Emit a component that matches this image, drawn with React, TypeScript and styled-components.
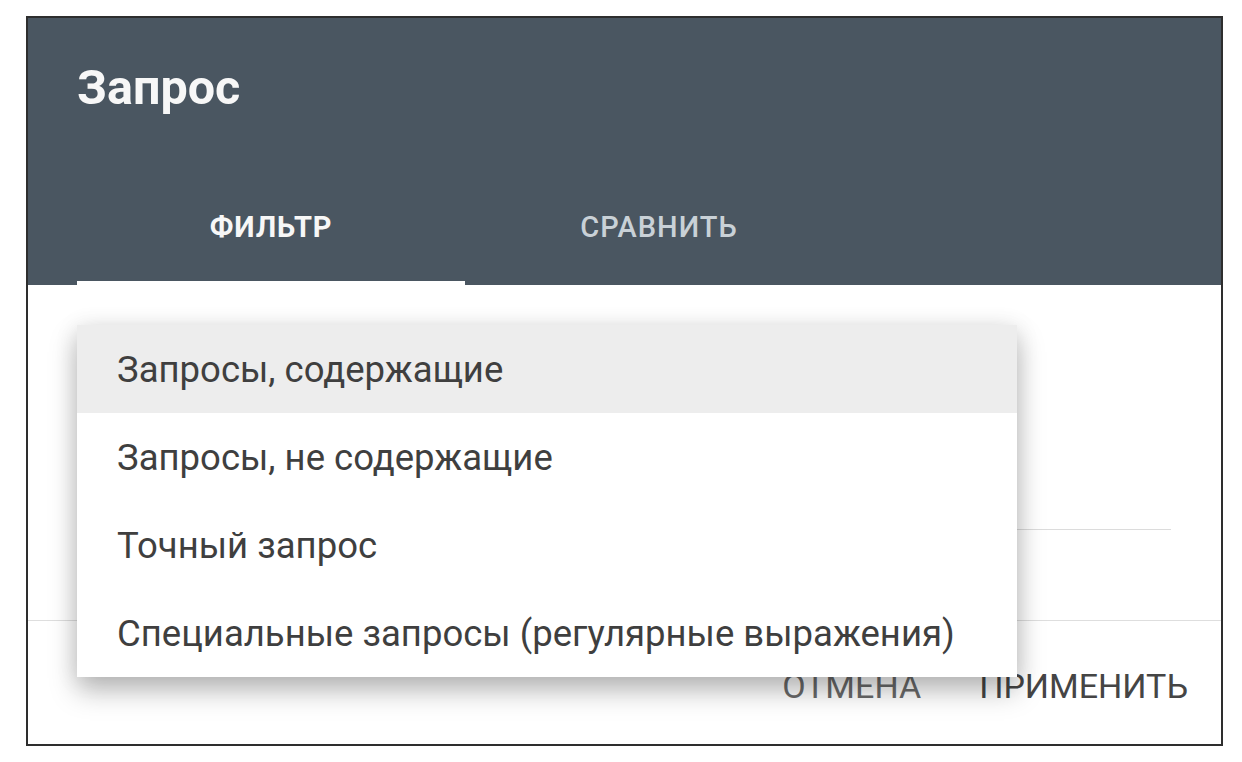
import React from 'react'
import styled, { createGlobalStyle } from 'styled-components'

const GlobalStyle = createGlobalStyle`
  html, body {
    margin: 0;
    padding: 0;
    background: #ffffff;
    font-family: Roboto, "Liberation Sans", Arial, sans-serif;
  }
`

const Page = styled.div`
  padding: 16px 0 0 26px;
`

const Dialog = styled.div`
  position: relative;
  box-sizing: border-box;
  width: 1197px;
  height: 730px;
  border: 2px solid #2e2e2e;
  background: #fff;
  display: flex;
  flex-direction: column;
`

const Header = styled.div`
  height: 267px;
  background: #4a5661;
  display: flex;
  flex-direction: column;
  justify-content: space-between;
`

const Title = styled.h1`
  margin: 0;
  padding: 44px 0 0 49px;
  font-size: 48.5px;
  font-weight: 700;
  line-height: 52px;
  color: #f7f7f7;
`

const Tabs = styled.div`
  display: flex;
  padding-left: 49px;
`

const Tab = styled.div<{ $active?: boolean }>`
  width: 388px;
  height: 86px;
  box-sizing: border-box;
  display: flex;
  align-items: center;
  justify-content: center;
  padding-bottom: 26px;
  font-size: 29px;
  font-weight: ${p => (p.$active ? 700 : 500)};
  letter-spacing: ${p => (p.$active ? '0.9px' : '1px')};
  color: ${p => (p.$active ? '#f7f7f7' : '#c9d1d7')};
  border-bottom: 4px solid ${p => (p.$active ? '#ffffff' : 'transparent')};
`

const Body = styled.div`
  flex: 1;
  display: flex;
  flex-direction: column;
  justify-content: flex-end;
  padding: 0 50px 90px 49px;
`

const Field = styled.div`
  height: 1px;
  background: #dcdcdc;
`

const Footer = styled.div`
  height: 124px;
  border-top: 1px solid #dedede;
  display: flex;
  justify-content: flex-end;
  align-items: flex-start;
  gap: 58px;
  padding: 48px 33px 0 0;
  box-sizing: border-box;
`

const FooterButton = styled.button<{ $primary?: boolean }>`
  border: none;
  background: none;
  padding: 0;
  font-family: inherit;
  font-size: 34px;
  font-weight: 400;
  line-height: 34px;
  color: ${p => (p.$primary ? '#454545' : '#6a6a6a')};
  text-transform: uppercase;
`

const Menu = styled.ul`
  position: absolute;
  left: 49px;
  top: 307px;
  width: 940px;
  margin: 0;
  padding: 0;
  list-style: none;
  background: #fff;
  box-shadow: 0 14px 26px rgba(0, 0, 0, 0.26), 0 2px 22px rgba(0, 0, 0, 0.1);
`

const MenuItem = styled.li<{ $selected?: boolean }>`
  height: 88px;
  display: flex;
  align-items: center;
  padding-left: 40px;
  font-size: 36.5px;
  color: #3f3f3f;
  background: ${p => (p.$selected ? '#ededed' : '#fff')};
`

const options = [
  'Запросы, содержащие',
  'Запросы, не содержащие',
  'Точный запрос',
  'Специальные запросы (регулярные выражения)',
]

export default function App() {
  return (
    <>
      <GlobalStyle />
      <Page>
        <Dialog>
          <Header>
            <Title>Запрос</Title>
            <Tabs>
              <Tab $active>ФИЛЬТР</Tab>
              <Tab>СРАВНИТЬ</Tab>
            </Tabs>
          </Header>
          <Body>
            <Field />
          </Body>
          <Footer>
            <FooterButton>Отмена</FooterButton>
            <FooterButton $primary>Применить</FooterButton>
          </Footer>
          <Menu>
            {options.map((o, i) => (
              <MenuItem key={o} $selected={i === 0}>{o}</MenuItem>
            ))}
          </Menu>
        </Dialog>
      </Page>
    </>
  )
}
